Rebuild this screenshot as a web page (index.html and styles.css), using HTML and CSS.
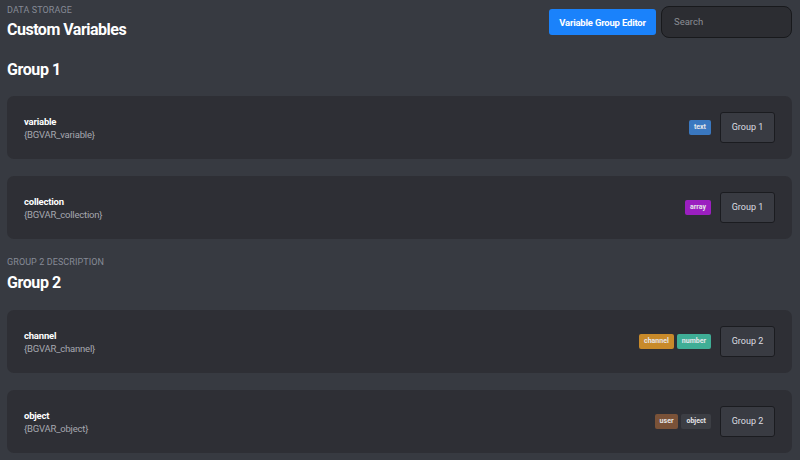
FILE: index.html
```html
<!DOCTYPE html>
<html>
<head>
<meta charset="utf-8">
<link rel="stylesheet" href="styles.css">
</head>
<body>
<div class="page">
  <div class="header">
    <div class="header-left">
      <div class="eyebrow">DATA STORAGE</div>
      <div class="title">Custom Variables</div>
    </div>
    <div class="header-right">
      <button class="btn-primary">Variable Group Editor</button>
      <div class="search">Search</div>
    </div>
  </div>

  <div class="group-title first">Group 1</div>
  <div class="card">
    <div class="info">
      <div class="name">variable</div>
      <div class="code">{BGVAR_variable}</div>
    </div>
    <div class="actions">
      <span class="badge b-text">text</span>
      <div class="group-btn">Group 1</div>
    </div>
  </div>
  <div class="card">
    <div class="info">
      <div class="name">collection</div>
      <div class="code">{BGVAR_collection}</div>
    </div>
    <div class="actions">
      <span class="badge b-array">array</span>
      <div class="group-btn">Group 1</div>
    </div>
  </div>

  <div class="eyebrow desc">GROUP 2 DESCRIPTION</div>
  <div class="group-title second">Group 2</div>
  <div class="card">
    <div class="info">
      <div class="name">channel</div>
      <div class="code">{BGVAR_channel}</div>
    </div>
    <div class="actions">
      <span class="badge b-channel">channel</span>
      <span class="badge b-number">number</span>
      <div class="group-btn">Group 2</div>
    </div>
  </div>
  <div class="card">
    <div class="info">
      <div class="name">object</div>
      <div class="code">{BGVAR_object}</div>
    </div>
    <div class="actions">
      <span class="badge b-user">user</span>
      <span class="badge b-object">object</span>
      <div class="group-btn">Group 2</div>
    </div>
  </div>
</div>
</body>
</html>
```

FILE: styles.css
```css
* { box-sizing: border-box; }
html, body { margin: 0; padding: 0; }
body {
  background: #373a41;
  font-family: Roboto, "Liberation Sans", sans-serif;
  color: #ffffff;
  width: 800px;
  height: 460px;
  overflow: hidden;
}
.page { padding: 4px 8px 0 7px; }
.header { display: flex; justify-content: space-between; align-items: flex-start; }
.eyebrow {
  font-size: 9px;
  line-height: 12px;
  color: #868a96;
  letter-spacing: 0.1px;
}
.title {
  margin-top: 4px;
  font-size: 16px;
  line-height: 20px;
  font-weight: 700;
  letter-spacing: -0.5px;
}
.header-right { display: flex; align-items: center; gap: 5px; margin-top: 2px; }
.btn-primary {
  width: 107px;
  height: 26px;
  border: none;
  border-radius: 3px;
  background: #1a82fb;
  color: #fff;
  font-family: Roboto, sans-serif;
  font-weight: 700;
  font-size: 9.5px;
  letter-spacing: -0.2px;
  padding: 0;
}
.search {
  width: 131px;
  height: 32px;
  border-radius: 8px;
  background: #2c2d32;
  border: 1px solid #18191c;
  color: #8b8d94;
  font-size: 9.5px;
  line-height: 30px;
  padding-left: 12px;
}
.group-title {
  font-size: 16px;
  line-height: 20px;
  font-weight: 700;
  letter-spacing: -0.4px;
}
.group-title.first { margin-top: 20px; margin-bottom: 16px; }
.eyebrow.desc { margin-top: 15px; }
.group-title.second { margin-top: 5px; margin-bottom: 17px; }
.card {
  height: 63px;
  margin-bottom: 17px;
  border-radius: 7px;
  background: #2e2f35;
  display: flex;
  align-items: center;
  justify-content: space-between;
  padding: 0 17px;
}
.card:first-of-type { margin-bottom: 18px; }
.name {
  font-weight: 700;
  font-size: 9.5px;
  line-height: 13px;
  letter-spacing: -0.2px;
}
.code {
  font-size: 9.5px;
  line-height: 13px;
  color: #a6a8b0;
  letter-spacing: -0.2px;
}
.actions { display: flex; align-items: center; }
.badge {
  display: inline-block;
  height: 15px;
  line-height: 15px;
  padding: 0 5px;
  border-radius: 2px;
  font-size: 7px;
  font-weight: 700;
  color: #e6e6ea;
  margin-left: 3px;
}
.b-text { background: #3a78c0; }
.b-array { background: #9b1fc0; }
.b-channel { background: #c88a2a; }
.b-number { background: #3fae96; }
.b-user { background: #7a5238; }
.b-object { background: #3c3e44; }
.group-btn {
  margin-left: 9px;
  width: 55px;
  height: 31px;
  border-radius: 3px;
  border: 1px solid #1b1c20;
  background: #393b42;
  color: #dcdde1;
  font-size: 9px;
  line-height: 29px;
  text-align: center;
}
```
